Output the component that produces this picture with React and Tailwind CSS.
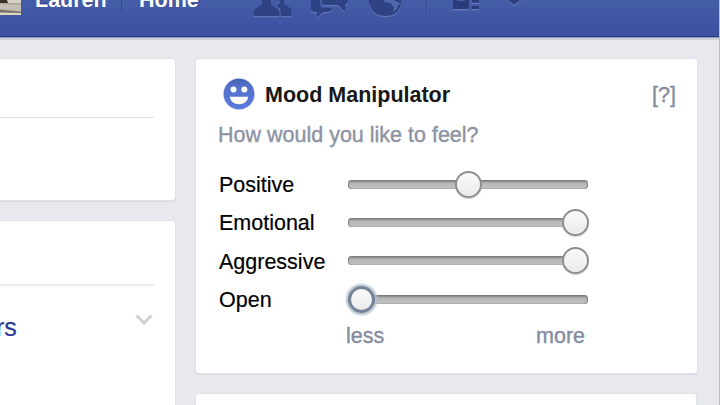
import clsx from 'clsx';

const moods = [
  { label: 'Positive', offset: 108 },
  { label: 'Emotional', offset: 215 },
  { label: 'Aggressive', offset: 215 },
  { label: 'Open', offset: 1, focused: true },
];

function NavIcons() {
  return (
    <svg className="block h-[36px] w-[290px] shrink-0" viewBox="240 0 290 36">
      <defs>
        <g id="glyphs">
          <path d="M253.500 16v-4q0-2 3-4l5-3q1-2 0-5h10q-1 3 0 5l5 3q2.500 1.500 2.500 4v4z" />
          <path d="M281 16v-4q0-3-3-5l-2-1 3.500-2q1-2 0-4h5q-1 2.500 0 4l4 3q3 1.500 3 4v5z" />
          <path d="M311 0h9v5q0 3 3 3h9q-1 4-5 4h-4l-6 6v-6h-3q-3 0-3-3z" />
          <path d="M322 0h26v2q-1 2-3 2.500V12l-7-7h-14q-2 0-2-2z" />
          <path d="M368.500 0h33q-1 16-16 16t-17-16z" />
        </g>
      </defs>
      <use href="#glyphs" y="1.3" fill="#6074b4" />
      <use href="#glyphs" fill="#2f4284" />
      <path d="M383 0l2 2 6 1.500 3 4-1 5 4-4 1-3 3-2-4-1.500-3-2z" fill="#5268ac" />
      <path d="M426.500 0v13" stroke="#3a4d94" />
      <path d="M427.500 0v13" stroke="#5065a9" />
      <path d="M453 9h16v1.500h-16zM472 2.500h7V4h-7zM472 9h7v1.500h-7z" fill="#6577b3" />
      <path d="M453 0h4v1h8V0h4v9h-16zM472 0h7v2.500h-7zM472 6h7v3h-7z" fill="#2a3b79" />
      <path d="M507 0h14l-7 6.500z" fill="#6577b3" />
      <path d="M508 0h12l-6 5z" fill="#2d3f80" />
    </svg>
  );
}

function Avatar() {
  return (
    <svg className="block h-[16px] w-[21px] shrink-0" viewBox="0 0 21 16">
      <path d="M0 0h21v15H0z" fill="#aaa49a" />
      <path d="M0 0h7l2 3H0z" fill="#3c302b" />
      <path d="M7 0h14v3H8z" fill="#d7d2c8" />
      <path d="M0 4l21 1v6L0 9z" fill="#c5bfb4" />
      <path d="M0 10l21 2v1L0 12z" fill="#716b60" />
      <path d="M0 13h21v2H0z" fill="#ded8bd" />
    </svg>
  );
}

function Header() {
  return (
    <header className="flex h-[37px] shrink-0 items-start overflow-hidden border-b border-[#213f86] bg-linear-to-b from-[#465da8] to-[#3c50a0] shadow-[0_1px_0_#8f99bd,0_3px_0_#cfd0d7]">
      <Avatar />
      <span className="-mt-[12px] ml-[14px] w-[86px] text-[21.500px] leading-6 font-bold text-white [text-shadow:0_-1px_1px_#2d3f80]">
        Lauren
      </span>
      <span className="h-[13px] w-px bg-[#374a90]" />
      <span className="-mt-[12px] ml-[17px] w-[101px] text-[21.500px] leading-6 font-bold text-white [text-shadow:0_-1px_1px_#2d3f80]">
        Home
      </span>
      <NavIcons />
    </header>
  );
}

function Card({ className, children }) {
  return (
    <section className={clsx('shrink-0 bg-white shadow-[0_0_0_1px_#e1e2e7,0_1px_0_1px_#d8dadf]', className)}>
      {children}
    </section>
  );
}

function SmileIcon() {
  return (
    <svg className="size-[32px] shrink-0" viewBox="0 0 32 32">
      <defs>
        <linearGradient id="face" x1="0" y1="0" x2="0" y2="1">
          <stop offset="0" stopColor="#4460ae" />
          <stop offset="0.25" stopColor="#5470cb" />
          <stop offset="1" stopColor="#5a79dc" />
        </linearGradient>
      </defs>
      <circle cx="16" cy="16" r="16" fill="#ccd5ee" />
      <circle cx="16" cy="16" r="15.300" fill="url(#face)" />
      <circle cx="10.500" cy="11.500" r="3" fill="#fff" />
      <circle cx="21.300" cy="11.500" r="3" fill="#fff" />
      <path d="M6.700 18.800h18.600q-1.300 7.400-9.300 7.400t-9.300-7.400z" fill="#fff" />
    </svg>
  );
}

function MoodSlider({ label, offset, focused }) {
  return (
    <div className="flex h-[38.300px] items-center">
      <span className="w-[129px] pt-[2px] text-[21.500px] leading-6 text-black [-webkit-text-stroke:0.2px_#000]">
        {label}
      </span>
      <div className="relative h-[9px] w-[240px] rounded-[4px] bg-linear-to-b from-[#737373] via-[#b5b5b5] via-35% to-[#c4c4c4] shadow-[inset_1px_0_1px_#858585,inset_-1px_0_1px_#858585,inset_0_-1px_0_#b8b8b8]">
        <span
          className={clsx(
            'absolute -top-[9px] size-[27px] rounded-full bg-linear-to-b from-[#fafafa] via-[#f3f3f3] via-50% to-[#ebebeb]',
            focused
              ? 'border-[3px] border-[#758399] shadow-[0_0_2px_2px_#b6c2ce]'
              : 'border-2 border-[#8e8e8e] shadow-[0_1px_1px_#d0d0d0]'
          )}
          style={{ left: offset - 1 }}
        />
      </div>
    </div>
  );
}

export default function App() {
  return (
    <div className="flex h-screen w-screen flex-col overflow-hidden border-r border-[#bfc0c4] bg-[#e8e9ee] font-['Liberation_Sans',Arial,sans-serif]">
      <Header />
      <main className="flex flex-1 gap-[21px] pt-[22px]">
        <div className="flex w-[175px] shrink-0 flex-col gap-[21px]">
          <Card className="h-[141px] rounded-r-[3px] pt-[58px]">
            <hr className="w-[154px] border-[#dedfe1]" />
          </Card>
          <Card className="h-[200px] rounded-tr-[3px] pt-[63px]">
            <hr className="w-[154px] border-t-2 border-[#ededef]" />
            <div className="flex h-[82px] w-[153px] items-start justify-between pt-[26px]">
              <span className="-ml-[4px] text-[25px] leading-[30px] text-[#293993] [-webkit-text-stroke:0.2px_#293993]">
                rs
              </span>
              <svg className="mt-[2px] h-[12px] w-[18px]" viewBox="0 0 18 12">
                <path d="M1.500 1.500L9 9l7.500-7.500" fill="none" stroke="#cfd0d7" strokeWidth="3" />
              </svg>
            </div>
          </Card>
        </div>

        <div className="flex flex-col gap-[21px]">
          <Card className="h-[314px] w-[501px] rounded-[3px] pt-[19px] pr-[21px] pl-[22px]">
            <div className="flex h-[32px] items-center pl-[5px]">
              <SmileIcon />
              <h2 className="ml-[10px] pt-[2px] text-[21.500px] leading-6 font-bold text-[#171717]">Mood Manipulator</h2>
              <span className="ml-auto pt-[2px] text-[21.500px] leading-6 text-[#858ca0] [-webkit-text-stroke:0.4px_#858ca0]">
                [?]
              </span>
            </div>
            <p className="mt-[13px] text-[21.500px] leading-6 text-[#8d93a3] [-webkit-text-stroke:0.4px_#8d93a3]">
              How would you like to feel?
            </p>
            <div className="mt-[18px] pl-px">
              {moods.map((mood) => (
                <MoodSlider key={mood.label} {...mood} />
              ))}
            </div>
            <div className="mt-[6px] ml-[128px] flex w-[239px] justify-between text-[21.500px] leading-6 text-[#858ca0] [-webkit-text-stroke:0.4px_#858ca0]">
              <span>less</span>
              <span>more</span>
            </div>
          </Card>
          <Card className="h-10 w-[500px] rounded-t-[3px]" />
        </div>
      </main>
    </div>
  );
}
